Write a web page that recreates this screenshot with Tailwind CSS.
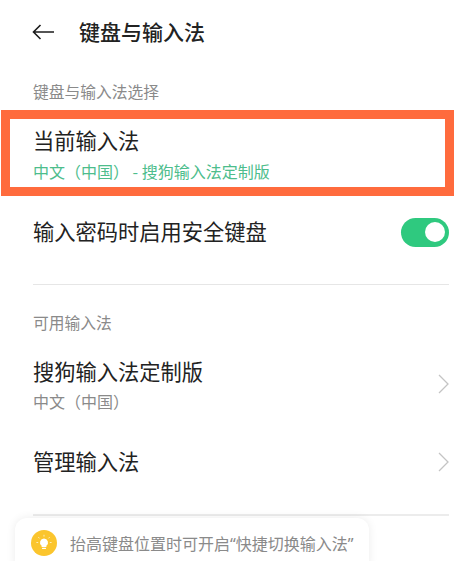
<!DOCTYPE html>
<html lang="zh"><head><meta charset="utf-8">
<script src="https://cdn.jsdelivr.net/npm/@tailwindcss/browser@4"></script>
</head>
<body class="bg-white">
<div class="relative w-[454px] h-[568px] overflow-hidden bg-white font-['Noto_Sans_CJK_SC','Noto_Sans',sans-serif]">
  <header class="flex items-center h-[31px] mt-[16px] pl-[32px]">
    <svg class="w-[22px] h-[16px]" viewBox="0 0 22 16" fill="none" stroke="#1c1c1c" stroke-width="1.6"><path d="M22 8H1.5M8.5 1L1.5 8L8.5 15"/></svg>
    <h1 class="ml-[25px] text-[21px] leading-[31px] font-medium text-[#222]">键盘与输入法</h1>
  </header>
  <p class="mt-[35px] ml-[33px] text-[15.75px] leading-[20px] text-[#8a8a8a]">键盘与输入法选择</p>
  <section class="mt-[8px] ml-[1px] w-[453px] h-[86px] border-[9px] border-[#ff6b3d] pl-[23px] flex flex-col">
    <span class="mt-[5px] text-[21.25px] leading-[32px] text-[#222]">当前输入法</span>
    <span class="mt-[4px] text-[16px] leading-[22px] text-[#4dbd8c] whitespace-nowrap">中文（中国） - 搜狗输入法定制版</span>
  </section>
  <div class="flex items-center justify-between h-[30px] mt-[21px] pl-[33px] pr-[5px]">
    <span class="pb-[2px] text-[21.25px] leading-[28px] text-[#222]">输入密码时启用安全键盘</span>
    <div class="flex items-center justify-end w-[48px] h-[29px] pr-[4px] rounded-full bg-[#2fc97f]"><div class="w-[20px] h-[20px] rounded-full bg-white"></div></div>
  </div>
  <div class="h-px ml-[33px] mr-[5px] mt-[37px] bg-[#e6e6e6]"></div>
  <p class="mt-[28px] ml-[33px] text-[15.75px] leading-[20px] text-[#8a8a8a]">可用输入法</p>
  <div class="flex items-center justify-between mt-[22px] pl-[33px] pr-[5px]">
    <div class="flex flex-col">
      <span class="text-[21.25px] leading-[32px] text-[#222]">搜狗输入法定制版</span>
      <span class="mt-[2px] text-[16px] leading-[24px] text-[#8a8a8a]">中文（中国）</span>
    </div>
    <svg class="w-[11px] h-[20px]" viewBox="0 0 11 20" fill="none" stroke="#c4c4c4" stroke-width="1.3"><path d="M1 1L10 10L1 19"/></svg>
  </div>
  <div class="flex items-center justify-between mt-[33px] pl-[33px] pr-[5px]">
    <span class="pb-[2px] text-[21.25px] leading-[30px] text-[#222]">管理输入法</span>
    <svg class="w-[11px] h-[20px]" viewBox="0 0 11 20" fill="none" stroke="#c4c4c4" stroke-width="1.3"><path d="M1 1L10 10L1 19"/></svg>
  </div>
  <div class="h-[2px] ml-[33px] mr-[5px] mt-[36px] bg-[#ececec]"></div>
  <div class="absolute left-[15px] top-[518px] w-[354px] h-[50px] rounded-t-[12px] bg-white shadow-[0_0_10px_rgba(0,0,0,0.08)] flex items-start pt-[12px] pl-[16px]">
    <div class="flex items-center justify-center w-[26px] h-[26px] rounded-full bg-[#fbc52d]">
      <svg class="w-[20px] h-[20px]" viewBox="0 0 20 20" fill="none"><path fill="#fff" d="M10 5.5a4 4 0 0 0-2.4 7.2V14h4.8v-1.3A4 4 0 0 0 10 5.5z"/><rect x="8" y="14.8" width="4" height="1.3" rx=".6" fill="#fff"/><path stroke="#fff" stroke-opacity=".75" stroke-width=".9" stroke-linecap="round" d="M10 2.2v1M4.6 4.4l.7.7M15.4 4.4l-.7.7M2.8 9.5h1M16.2 9.5h1"/></svg>
    </div>
    <span class="ml-[13px] text-[16px] leading-[26px] text-[#8a8a8a] whitespace-nowrap">抬高键盘位置时可开启<span class="font-['Noto_Sans']">“</span>快捷切换输入法<span class="font-['Noto_Sans']">”</span></span>
  </div>
  <div class="absolute left-0 top-[561px] w-full h-[7px] bg-white"></div>
</div>
</body></html>
